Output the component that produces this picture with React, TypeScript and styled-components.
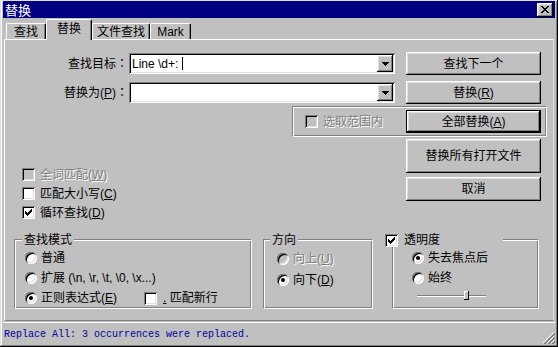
import React from "react";
import styled, { createGlobalStyle, css } from "styled-components";

const FACE = "#c0c0c0";
const UI_FONT = `"Liberation Sans", "Noto Sans CJK SC", sans-serif`;

const GlobalStyle = createGlobalStyle`
  html, body { margin: 0; padding: 0; background: ${FACE}; }
  body { font-family: ${UI_FONT}; font-size: 12px; line-height: 14px; color: #000; }
  *, *::before, *::after { box-sizing: border-box; }
  #root { width: 558px; height: 347px; }
  u { text-decoration-thickness: 1px; text-underline-offset: 1px; }
`;

const raised = css`
  box-shadow: inset -1px -1px #000, inset 1px 1px #fff, inset -2px -2px #808080,
    inset 2px 2px #dfdfdf;
`;
const sunken = css`
  box-shadow: inset 1px 1px #808080, inset -1px -1px #fff, inset 2px 2px #000,
    inset -2px -2px #dfdfdf;
`;
const disabledText = css`
  color: #808080;
  text-shadow: 1px 1px 0 #fff;
`;

const Window = styled.div`
  width: 558px;
  height: 347px;
  background: ${FACE};
  display: flex;
  flex-direction: column;
  padding: 1px 3px 3px 3px;
  box-shadow: inset -1px -1px #000, inset 1px 1px #dfdfdf, inset -2px -2px #808080,
    inset 2px 2px #fff;
  overflow: hidden;
`;

const TitleBar = styled.div`
  height: 17px;
  flex: none;
  background: #000080;
  color: #fff;
  display: flex;
  align-items: center;
  justify-content: space-between;
  padding: 0 2px 0 2px;
`;

const TitleText = styled.span`
  font-family: "Noto Sans CJK SC", sans-serif;
  font-size: 13px;
  line-height: 17px;
`;

const CloseButton = styled.div`
  width: 16px;
  height: 14px;
  background: ${FACE};
  ${raised};
  display: flex;
  align-items: center;
  justify-content: center;
  padding-bottom: 1px;
`;

const Body = styled.div`
  flex: 1;
  min-height: 0;
  display: flex;
  flex-direction: column;
  padding: 1px 1px 0 1px;
`;

const TabStrip = styled.div`
  height: 20px;
  flex: none;
  display: flex;
  align-items: flex-end;
  padding-left: 2px;
  position: relative;
  z-index: 1;
`;

const Tab = styled.div<{ $active?: boolean; $w: number }>`
  width: ${(p) => p.$w}px;
  height: ${(p) => (p.$active ? 21 : 16)}px;
  margin-bottom: ${(p) => (p.$active ? -1 : 0)}px;
  background: ${FACE};
  border-top: 1px solid #fff;
  border-left: 1px solid #fff;
  border-right: 1px solid #000;
  border-radius: 2px 2px 0 0;
  box-shadow: inset -1px 0 #808080;
  display: flex;
  justify-content: center;
  align-items: ${(p) => (p.$active ? "flex-start" : "center")};
  padding-top: ${(p) => (p.$active ? 2 : 0)}px;
  white-space: nowrap;
`;

const Panel = styled.div`
  flex: 1;
  min-height: 0;
  display: flex;
  flex-direction: column;
  border-top: 1px solid #fff;
  border-left: 1px solid #fff;
  border-right: 1px solid #dfdfdf;
  border-bottom: 1px solid #808080;
  padding: 12px 12px 0 0;
`;

const FieldRow = styled.div<{ $mt?: number }>`
  display: flex;
  align-items: center;
  height: 23px;
  margin-top: ${(p) => p.$mt ?? 0}px;
`;

const FieldLabel = styled.div`
  width: 124px;
  text-align: right;
  padding-right: 1px;
  white-space: nowrap;
`;

const Colon = styled.span`
  font-family: "Noto Sans CJK TC", "Noto Sans CJK SC", sans-serif;
`;

const Combo = styled.div`
  width: 266px;
  height: 21px;
  background: #fff;
  ${sunken};
  display: flex;
  align-items: center;
  padding: 2px;
  margin-right: 11px;
`;

const ComboText = styled.div`
  flex: 1;
  padding-left: 1px;
  white-space: pre;
  display: flex;
  align-items: center;
`;

const Caret = styled.span`
  display: inline-block;
  width: 1px;
  height: 13px;
  background: #000;
`;

const DropButton = styled.div`
  width: 16px;
  height: 17px;
  background: ${FACE};
  ${raised};
  display: flex;
  align-items: center;
  justify-content: center;
`;

const PushButton = styled.button<{ $h?: number; $default?: boolean }>`
  width: 135px;
  height: ${(p) => p.$h ?? 23}px;
  flex: none;
  margin: 0;
  padding: 0;
  border: none;
  background: ${FACE};
  font: inherit;
  color: #000;
  white-space: nowrap;
  ${raised};
  ${(p) =>
    p.$default &&
    css`
      box-shadow: inset 0 0 0 1px #000, inset -2px -2px #000, inset 2px 2px #fff,
        inset -3px -3px #808080, inset 3px 3px #dfdfdf;
    `}
`;

const ScopeGroup = styled.div`
  width: 255px;
  height: 31px;
  margin: 2px -6px 0 auto;
  border: 1px solid;
  border-color: #808080 #fff #fff #808080;
  box-shadow: inset 1px 1px #fff, inset -1px -1px #808080;
  display: flex;
  align-items: center;
  justify-content: space-between;
  padding: 0 5px 0 12px;
`;

const MiddleSection = styled.div`
  display: flex;
  margin-top: 2px;
`;

const Options = styled.div`
  display: flex;
  flex-direction: column;
  padding: 26px 0 0 17px;
`;

const ButtonColumn = styled.div`
  margin-left: auto;
  display: flex;
  flex-direction: column;
  gap: 4px;
`;

const CheckRow = styled.div<{ $disabled?: boolean; $h?: number; $gap?: number }>`
  display: flex;
  align-items: center;
  gap: ${(p) => p.$gap ?? 5}px;
  height: ${(p) => p.$h ?? 19}px;
  white-space: nowrap;
  ${(p) => p.$disabled && disabledText}
`;

const Box = styled.span<{ $disabled?: boolean }>`
  width: 13px;
  height: 13px;
  flex: none;
  background: ${(p) => (p.$disabled ? FACE : "#fff")};
  ${sunken};
  display: inline-flex;
  align-items: center;
  justify-content: center;
`;

const RadioRow = styled.div<{ $disabled?: boolean; $h?: number; $w?: number }>`
  display: flex;
  align-items: center;
  gap: 4px;
  height: ${(p) => p.$h ?? 20}px;
  width: ${(p) => (p.$w ? `${p.$w}px` : "auto")};
  flex: none;
  white-space: nowrap;
  ${(p) => p.$disabled && disabledText}
`;

const RadioCircle = styled.span<{ $disabled?: boolean }>`
  width: 12px;
  height: 12px;
  flex: none;
  border-radius: 50%;
  background: ${(p) => (p.$disabled ? FACE : "#fff")};
  box-shadow: inset 1px 1px #808080, inset -1px -1px #fff, inset 2px 2px #000,
    inset -2px -2px #dfdfdf;
  display: flex;
  align-items: center;
  justify-content: center;
`;

const RadioDot = styled.span`
  width: 4px;
  height: 4px;
  border-radius: 50%;
  background: #000;
`;

const GroupsRow = styled.div`
  display: flex;
  align-items: flex-start;
  margin-top: 17px;
  padding-left: 9px;
`;

const Group = styled.div<{ $w: number; $ml?: number; $pl: number }>`
  width: ${(p) => p.$w}px;
  height: 70px;
  margin-left: ${(p) => p.$ml ?? 0}px;
  border: 1px solid;
  border-color: #808080 #fff #fff #808080;
  box-shadow: inset 1px 1px #fff, inset -1px -1px #808080;
  display: flex;
  flex-direction: column;
  padding-left: ${(p) => p.$pl}px;
`;

const Caption = styled.div<{ $ml?: number; $w?: number }>`
  align-self: flex-start;
  height: 14px;
  line-height: 14px;
  margin: -7px 0 1px ${(p) => p.$ml ?? -5}px;
  padding: 0 2px;
  width: ${(p) => (p.$w ? `${p.$w}px` : "auto")};
  background: ${FACE};
  white-space: nowrap;
  display: flex;
  align-items: center;
  gap: 6px;
`;

const InlineRow = styled.div`
  display: flex;
  align-items: center;
`;

const Slider = styled.div`
  position: relative;
  width: 69px;
  height: 9px;
  margin: 3px 0 0 5px;
  &::before {
    content: "";
    position: absolute;
    left: 0;
    right: 0;
    top: 4px;
    height: 2px;
    border-top: 1px solid #808080;
    border-bottom: 1px solid #fff;
  }
`;

const SliderThumb = styled.div`
  position: absolute;
  top: 0;
  width: 5px;
  height: 9px;
  background: ${FACE};
  box-shadow: inset -1px -1px #000, inset 1px 1px #fff;
`;

const StatusBar = styled.div`
  height: 22px;
  flex: none;
  display: flex;
  align-items: center;
  border-top: 1px solid #fff;
  margin-top: 1px;
  padding: 0 0 0 1px;
`;

const StatusText = styled.span`
  font-family: "Liberation Mono", "DejaVu Sans Mono", monospace;
  font-size: 10px;
  line-height: 12px;
  color: #00009c;
  white-space: pre;
  padding-top: 2px;
`;

const Grip = styled.svg`
  margin-left: auto;
  align-self: flex-end;
  flex: none;
`;

const CloseIcon = () => (
  <svg width="8" height="7" viewBox="0 0 8 7" shapeRendering="crispEdges">
    <path
      d="M0 0h2v1H0zM6 0h2v1H6zM1 1h2v1H1zM5 1h2v1H5zM2 2h4v1H2zM3 3h2v1H3zM2 4h4v1H2zM1 5h2v1H1zM5 5h2v1H5zM0 6h2v1H0zM6 6h2v1H6z"
      fill="#000"
    />
  </svg>
);

const DownArrow = () => (
  <svg width="7" height="4" viewBox="0 0 7 4" shapeRendering="crispEdges">
    <path d="M0 0h7v1H0zM1 1h5v1H1zM2 2h3v1H2zM3 3h1v1H3z" fill="#000" />
  </svg>
);

const CheckMark = () => (
  <svg width="7" height="7" viewBox="0 0 7 7" shapeRendering="crispEdges">
    <path
      d="M6 0h1v3H6zM5 1h1v3H5zM4 2h1v3H4zM3 3h1v3H3zM2 4h1v3H2zM1 3h1v3H1zM0 2h1v3H0z"
      fill="#000"
    />
  </svg>
);

const Check = ({
  checked,
  disabled,
  children,
  gap,
  h,
}: {
  checked?: boolean;
  disabled?: boolean;
  children: React.ReactNode;
  gap?: number;
  h?: number;
}) => (
  <CheckRow $disabled={disabled} $gap={gap} $h={h}>
    <Box $disabled={disabled}>{checked && <CheckMark />}</Box>
    <span>{children}</span>
  </CheckRow>
);

const Radio = ({
  checked,
  disabled,
  children,
  h,
  w,
}: {
  checked?: boolean;
  disabled?: boolean;
  children: React.ReactNode;
  h?: number;
  w?: number;
}) => (
  <RadioRow $disabled={disabled} $h={h} $w={w}>
    <RadioCircle $disabled={disabled}>{checked && <RadioDot />}</RadioCircle>
    <span>{children}</span>
  </RadioRow>
);

export default function App() {
  const opacity = 0.7;
  return (
    <>
      <GlobalStyle />
      <Window>
        <TitleBar>
          <TitleText>替换</TitleText>
          <CloseButton>
            <CloseIcon />
          </CloseButton>
        </TitleBar>
        <Body>
          <TabStrip>
            <Tab $w={40}>查找</Tab>
            <Tab $w={46} $active>
              替换
            </Tab>
            <Tab $w={58}>文件查找</Tab>
            <Tab $w={41}>Mark</Tab>
          </TabStrip>
          <Panel>
            <FieldRow>
              <FieldLabel>
                查找目标<Colon>：</Colon>
              </FieldLabel>
              <Combo>
                <ComboText>
                  {"Line \\d+: "}
                  <Caret />
                </ComboText>
                <DropButton>
                  <DownArrow />
                </DropButton>
              </Combo>
              <PushButton>查找下一个</PushButton>
            </FieldRow>
            <FieldRow $mt={6}>
              <FieldLabel>
                替换为(<u>P</u>)<Colon>：</Colon>
              </FieldLabel>
              <Combo>
                <ComboText />
                <DropButton>
                  <DownArrow />
                </DropButton>
              </Combo>
              <PushButton>
                替换(<u>R</u>)
              </PushButton>
            </FieldRow>
            <ScopeGroup>
              <Check disabled>选取范围内</Check>
              <PushButton $default>
                全部替换(<u>A</u>)
              </PushButton>
            </ScopeGroup>
            <MiddleSection>
              <Options>
                <Check disabled>
                  全词匹配(<u>W</u>)
                </Check>
                <Check>
                  匹配大小写(<u>C</u>)
                </Check>
                <Check checked>
                  循环查找(<u>D</u>)
                </Check>
              </Options>
              <ButtonColumn>
                <PushButton $h={34}>替换所有打开文件</PushButton>
                <PushButton $h={24}>取消</PushButton>
              </ButtonColumn>
            </MiddleSection>
            <GroupsRow>
              <Group $w={238} $pl={10}>
                <Caption $ml={-3}>查找模式</Caption>
                <Radio>普通</Radio>
                <Radio>{"扩展 (\\n, \\r, \\t, \\0, \\x...)"}</Radio>
                <InlineRow>
                  <Radio checked w={119}>
                    正则表达式(<u>E</u>)
                  </Radio>
                  <Check gap={6} h={20}>
                    <u>.</u> 匹配新行
                  </Check>
                </InlineRow>
              </Group>
              <Group $w={110} $ml={11} $pl={13}>
                <Caption $ml={-7}>方向</Caption>
                <Radio disabled h={21}>
                  向上(<u>U</u>)
                </Radio>
                <Radio checked h={21}>
                  向下(<u>D</u>)
                </Radio>
              </Group>
              <Group $w={147} $ml={19} $pl={19}>
                <Caption $ml={-29} $w={120}>
                  <Box>
                    <CheckMark />
                  </Box>
                  透明度
                </Caption>
                <Radio checked>失去焦点后</Radio>
                <Radio>始终</Radio>
                <Slider>
                  <SliderThumb style={{ left: `${Math.round(opacity * 67)}px` }} />
                </Slider>
              </Group>
            </GroupsRow>
          </Panel>
        </Body>
        <StatusBar>
          <StatusText>Replace All: 3 occurrences were replaced.</StatusText>
          <Grip width="12" height="12" viewBox="0 0 12 12" shapeRendering="crispEdges">
            <path d="M11 0L0 11M11 4L4 11M11 8L8 11" stroke="#fff" strokeWidth="1" />
            <path
              d="M12 1L1 12M12 2L2 12M12 5L5 12M12 6L6 12M12 9L9 12M12 10L10 12"
              stroke="#808080"
              strokeWidth="1"
            />
          </Grip>
        </StatusBar>
      </Window>
    </>
  );
}
